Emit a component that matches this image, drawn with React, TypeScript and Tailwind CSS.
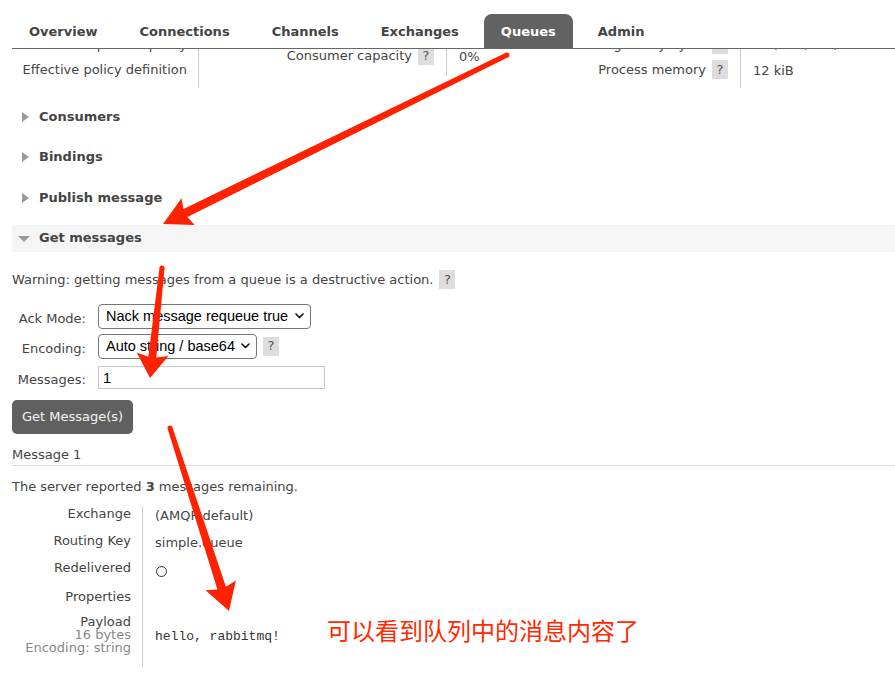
import React from "react";

type Pt = [number, number];

// builds a tapered arrow (shaft + head) as one polygon
function arrowPoints(tail: Pt, tip: Pt, w0: number, w1: number, headLen: number, headHalf: number) {
  const dx = tip[0] - tail[0];
  const dy = tip[1] - tail[1];
  const len = Math.hypot(dx, dy);
  const ux = dx / len;
  const uy = dy / len;
  const nx = -uy;
  const ny = ux;
  const bx = tip[0] - ux * headLen;
  const by = tip[1] - uy * headLen;
  const pts: Pt[] = [
    [tail[0] + (nx * w0) / 2, tail[1] + (ny * w0) / 2],
    [bx + (nx * w1) / 2, by + (ny * w1) / 2],
    [bx - ux * 3 + nx * headHalf, by - uy * 3 + ny * headHalf],
    tip,
    [bx - ux * 3 - nx * headHalf, by - uy * 3 - ny * headHalf],
    [bx - (nx * w1) / 2, by - (ny * w1) / 2],
    [tail[0] - (nx * w0) / 2, tail[1] - (ny * w0) / 2],
  ];
  return pts.map((p) => `${p[0].toFixed(1)},${p[1].toFixed(1)}`).join(" ");
}

const arrows: { tail: Pt; tip: Pt; w0: number; w1: number; head: number; half: number }[] = [
  { tail: [507, 55], tip: [163, 224], w0: 5, w1: 9, head: 25, half: 15 },
  { tail: [162, 268], tip: [150, 378], w0: 5, w1: 8, head: 21, half: 16 },
  { tail: [170, 428], tip: [229, 611], w0: 5, w1: 9, head: 24, half: 16 },
];

function Help() {
  return (
    <span className="inline-flex h-[19px] w-[16px] items-center justify-center bg-[#dddddd] text-[13px] text-[#555]">
      ?
    </span>
  );
}

function Chevron() {
  return (
    <svg className="pointer-events-none absolute right-[7px] top-1/2 -translate-y-1/2" width="9" height="6" viewBox="0 0 9 6" fill="none">
      <path d="M1 1l3.5 3.5L8 1" stroke="#111" strokeWidth="1.6" strokeLinecap="round" strokeLinejoin="round" />
    </svg>
  );
}

const tabs = ["Overview", "Connections", "Channels", "Exchanges", "Queues", "Admin"];

export default function App() {
  return (
    <div className="relative min-h-[683px] w-full overflow-hidden bg-white font-['DejaVu_Sans',Verdana,sans-serif] text-[13px] leading-[16px] text-[#444]">
      <header className="sticky top-0 z-10 h-[49px] bg-white pl-3">
        <nav className="flex h-full items-end gap-2 border-b border-[#666]">
          {tabs.map((t) => (
            <a
              key={t}
              href="#"
              className={`flex h-[34px] items-center rounded-t-[8px] px-[17px] pt-[1px] font-bold ${
                t === "Queues" ? "bg-[#626262] text-white" : "text-[#444]"
              }`}
            >
              {t}
            </a>
          ))}
        </nav>
      </header>

      <main className="-mt-[17px] pl-3">
        {/* queue details, top rows are scrolled under the header */}
        <div className="flex items-start">
          <div className="flex w-[187px] flex-col border-r border-[#ccc] pb-[6px] pr-[11px] text-right">
            <div className="flex h-[25px] items-center justify-end">Operator policy</div>
            <div className="flex h-[25px] items-center justify-end">Effective policy definition</div>
          </div>
          <div className="mt-[11px] flex w-[248px] flex-col border-r border-[#ccc] pb-[8px] pr-[12px]">
            <div className="flex h-[25px] items-center justify-end gap-[6px]">
              Consumer capacity <Help />
            </div>
          </div>
          <div className="mt-[11px] flex w-[100px] flex-col pl-[12px]">
            <div className="flex h-[25px] items-center pt-[3px]">0%</div>
          </div>
          <div className="flex w-[194px] flex-col border-r border-[#ccc] pb-[6px] pr-[12px]">
            <div className="flex h-[25px] items-center justify-end gap-[6px]">
              Message body bytes <Help />
            </div>
            <div className="flex h-[25px] items-center justify-end gap-[6px]">
              Process memory <Help />
            </div>
          </div>
          <div className="flex flex-col pl-[12px]">
            <div className="flex h-[25px] items-center">0 B, 0 B, 0 B, 0 B</div>
            <div className="flex h-[25px] items-center pt-[3px]">12 kiB</div>
          </div>
        </div>

        <div className="mt-[15px] flex flex-col gap-[13.5px] font-bold">
          {["Consumers", "Bindings", "Publish message"].map((s) => (
            <div key={s} className="flex h-[27px] items-center">
              <span className="ml-[10px] mr-[10px] h-0 w-0 border-y-[5px] border-l-[7px] border-y-transparent border-l-[#999]" />
              {s}
            </div>
          ))}
          <div className="flex h-[27px] items-center bg-[#f5f5f5]">
            <span className="ml-[6px] mr-[9px] mt-[2px] h-0 w-0 border-x-[6px] border-t-[6px] border-x-transparent border-t-[#999]" />
            Get messages
          </div>
        </div>

        <div className="mt-[19px] flex h-[18px] items-center gap-[6px]">
          Warning: getting messages from a queue is a destructive action. <Help />
        </div>

        <div className="mt-[15px] flex flex-col">
          <div className="flex h-[25px] items-center">
            <span className="w-[74px] pt-[5px] text-right">Ack Mode:</span>
            <div className="relative ml-[12px]">
              <select className="h-[25px] w-[213px] appearance-none rounded-[4px] border border-[#767676] bg-white pl-[7px] font-['Liberation_Sans',Arial,sans-serif] text-[14.5px] text-black">
                <option>Nack message requeue true</option>
              </select>
              <Chevron />
            </div>
          </div>
          <div className="mt-[5px] flex h-[25px] items-center">
            <span className="w-[74px] pt-[5px] text-right">Encoding:</span>
            <div className="relative ml-[12px]">
              <select className="h-[25px] w-[159px] appearance-none rounded-[4px] border border-[#767676] bg-white pl-[7px] font-['Liberation_Sans',Arial,sans-serif] text-[14.5px] text-black">
                <option>Auto string / base64</option>
              </select>
              <Chevron />
            </div>
            <span className="ml-[6px]">
              <Help />
            </span>
          </div>
          <div className="mt-[8px] flex h-[22px] items-center">
            <span className="w-[74px] pt-[5px] text-right">Messages:</span>
            <input
              defaultValue="1"
              className="ml-[12px] h-[23px] w-[227px] border border-[#c8c8c8] pl-[4px] font-['Liberation_Sans',Arial,sans-serif] text-[14.5px] text-black outline-none"
            />
          </div>
        </div>

        <button className="mt-[11px] h-[34px] rounded-[5px] bg-[#606060] px-[10px] text-[13px] text-[#f4f4f4]">
          Get Message(s)
        </button>

        <div className="mt-[13px] border-b border-[#ddd] pb-[2px]">Message 1</div>

        <p className="mt-[13px]">
          The server reported <b>3</b> messages remaining.
        </p>

        <div className="mt-[11px] grid grid-cols-[130px_1fr]">
          <div className="h-[27px] pr-[11px] text-right">Exchange</div>
          <div className="h-[27px] border-l border-[#ccc] pl-[12px] pt-[2px]">(AMQP default)</div>
          <div className="h-[27px] pr-[11px] text-right">Routing Key</div>
          <div className="h-[27px] border-l border-[#ccc] pl-[12px] pt-[2px]">simple.queue</div>
          <div className="h-[29px] pr-[11px] text-right">Redelivered</div>
          <div className="h-[29px] border-l border-[#ccc] pl-[13px] pt-[6px]">
            <div className="h-[11px] w-[11px] rounded-full border border-[#333]" />
          </div>
          <div className="h-[25px] pr-[11px] text-right">Properties</div>
          <div className="h-[25px] border-l border-[#ccc]" />
          <div className="h-[53px] pr-[11px] pt-[1px] text-right leading-[13px]">
            <div>Payload</div>
            <div className="text-[#888]">16 bytes</div>
            <div className="text-[#888]">Encoding: string</div>
          </div>
          <div className="h-[53px] border-l border-[#ccc] pl-[12px] pt-[15px] font-['Liberation_Mono','Courier_New',monospace] text-[13px] text-[#333]">
            hello, rabbitmq!
          </div>
        </div>
      </main>

      {/* annotation overlay */}
      <div className="pointer-events-none absolute left-[327px] top-[616px] z-20 font-['Noto_Sans_CJK_SC',sans-serif] text-[24px] leading-[28px] text-[#ff2a00]">
        可以看到队列中的消息内容了
      </div>
      <svg className="pointer-events-none absolute left-0 top-0 z-20" width="895" height="683" viewBox="0 0 895 683">
        {arrows.map((a, i) => (
          <g key={i} fill="#ff2200">
            <polygon points={arrowPoints(a.tail, a.tip, a.w0, a.w1, a.head, a.half)} />
            <circle cx={a.tail[0]} cy={a.tail[1]} r={a.w0 / 2} />
          </g>
        ))}
      </svg>
    </div>
  );
}
